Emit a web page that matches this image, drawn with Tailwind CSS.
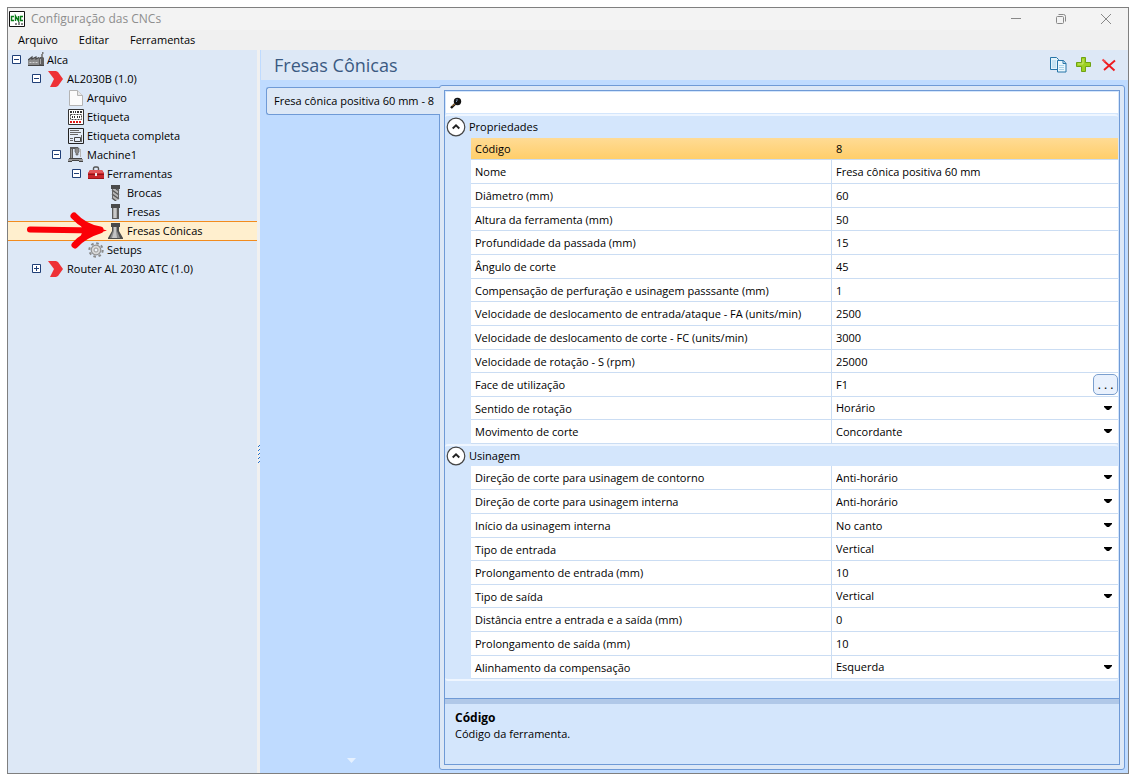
<!DOCTYPE html>
<html lang="pt-BR">
<head>
<meta charset="utf-8">
<title>Configuração das CNCs</title>
<script src="https://cdn.jsdelivr.net/npm/@tailwindcss/browser@4"></script>
</head>
<body class="flex h-screen bg-white pt-[7px] pr-1 pb-1 pl-[7px] font-['Segoe_UI','Open_Sans','Noto_Sans',sans-serif] text-[11px] text-black">

<svg class="hidden" aria-hidden="true">
  <symbol id="i-factory" viewBox="0 0 16 16">
    <path d="M0 14V8l4-3v2l4-2v2l3-1.500V14z" fill="#8b8b8b"/>
    <path d="M0 8l4-3v2l4-2v2l3-1.500" fill="none" stroke="#4a4a4a" stroke-width="1.200"/>
    <path d="M11 14V6l1-1h3l1 1v8z" fill="#606060"/><path d="M13 2h2v3h-2z" fill="#8a8a8a"/><path d="M14 0h1.500v2H14z" fill="#777"/>
    <path d="M1.500 10.500h8" stroke="#d0d0d0" stroke-dasharray="2 1"/><path d="M0 13.500h16" stroke="#444"/><path d="M12.500 7v5" stroke="#aaa"/>
  </symbol>
  <symbol id="i-chevron" viewBox="0 0 16 16"><path d="M0 0h8l2 1 5 7-5 7-2 1H2l4-8z" fill="#ee3136"/></symbol>
  <symbol id="i-file" viewBox="0 0 16 16">
    <path d="M1.500 0.500h8l5 5v10h-13z" fill="#fbfbfb" stroke="#b4b4b4"/><path d="M9.500 0.500v5h5" fill="#e8e8e8" stroke="#b4b4b4"/>
  </symbol>
  <symbol id="i-label" viewBox="0 0 16 16">
    <path d="M0.500 0.500h15v15h-15z" fill="#fff" stroke="#333"/>
    <path d="M2 2h2v2H2zm3 0h1v2H5zm2 0h1v2H7zm2 0h2v2H9zm3 0h2v2h-2z" fill="#333"/>
    <path d="M2.500 5.500h11v5h-11z" fill="none" stroke="#444" stroke-dasharray="2 1"/><path d="M4 8h3M9 8h3" stroke="#333" stroke-width="2" stroke-dasharray="1 1"/>
    <path d="M2 13h12" stroke="#e01818" stroke-width="2" stroke-dasharray="2 1"/>
  </symbol>
  <symbol id="i-labelfull" viewBox="0 0 16 16">
    <path d="M0.500 0.500h15v15h-15z" fill="#e5edf8" stroke="#222"/>
    <path d="M2 2.500h9M2 4.500h11M2 6.500h8M2 10.500h3M2 12.500h3" stroke="#666"/>
    <path d="M6.500 9.500h6v4h-6z" fill="none" stroke="#444"/><path d="M13.500 7v7" stroke="#666"/>
  </symbol>
  <symbol id="i-machine" viewBox="0 0 16 16">
    <path d="M2 0h8v2H5v9H2z" fill="#5c5c5c"/><path d="M3.500 2v9" stroke="#9a9a9a"/>
    <path d="M7 1h4v4l-1 1v2H8V6L7 5z" fill="#8b8b8b" stroke="#555" stroke-width=".6"/><path d="M12 2h1v8h-1z" fill="#b5b5b5"/>
    <path d="M1 11h13v1H1z" fill="#444"/><path d="M0 12h15v2H0z" fill="#999"/><path d="M0 14h4v1H0zm11 0h4v1h-4zM4 13h7v1H4z" fill="#444"/>
  </symbol>
  <symbol id="i-toolbox" viewBox="0 0 16 16">
    <path d="M5.500 4V2.500q0-1.500 1.500-1.500h2q1.500 0 1.500 1.500V4" fill="none" stroke="#555" stroke-width="1.400"/>
    <path d="M2 4h12l2 3v6H0V7z" fill="#c9262b"/><path d="M2 4h12l1.300 3H.7z" fill="#e2575a"/>
    <path d="M0 8.500h16" stroke="#8f1519"/><path d="M7 7h2v3H7z" fill="#ececec"/><path d="M0 12.500h16" stroke="#9a1519"/>
  </symbol>
  <symbol id="i-drill" viewBox="0 0 16 16">
    <path d="M3 0h9v4H3z" fill="#4a4a4a"/><path d="M4 4h7v10l-3 2-4-2z" fill="#b5b5b5"/>
    <path d="M4 5l7 5M4 9l7 5M4 13l4 3M8 4l3 2" stroke="#555" stroke-width="1.300"/><path d="M4.500 4v10M10.500 4v10" stroke="#666"/>
  </symbol>
  <symbol id="i-mill" viewBox="0 0 16 16">
    <path d="M3 0h9v4H3z" fill="#4a4a4a"/><path d="M4 4h7v11H4z" fill="#5a5a5a"/><path d="M5 4h4v10H5z" fill="#aaa"/><path d="M6 4h2v10H6z" fill="#c8c8c8"/>
  </symbol>
  <symbol id="i-cone" viewBox="0 0 16 16">
    <path d="M3 0h9v4H3z" fill="#4a4a4a"/><path d="M4 4h7v4l4 7v1H0v-1l4-7z" fill="#4d4d4d"/><path d="M5 4h4v4l3 7H2l3-7z" fill="#8c8c8c"/><path d="M6 4h2v4l1 7H4l2-7z" fill="#c4c4c4"/>
  </symbol>
  <symbol id="i-gear" viewBox="0 0 16 16">
    <circle cx="8" cy="8" r="6.700" fill="none" stroke="#8a8a8a" stroke-width="2" stroke-dasharray="2.600 2.660"/>
    <circle cx="8" cy="8" r="4.800" fill="#d8d8d8" stroke="#929292" stroke-width="1.200"/><circle cx="8" cy="8" r="2" fill="#eef3fa" stroke="#999"/>
  </symbol>
  <symbol id="i-plusbox" viewBox="0 0 9 9"><path d="M0.500 0.500h8v8h-8z" fill="#fff" stroke="#1f3f77"/><path d="M2 4.500h5M4.500 2v5" stroke="#1f3f77"/></symbol>
  <symbol id="i-minusbox" viewBox="0 0 9 9"><path d="M0.500 0.500h8v8h-8z" fill="#fff" stroke="#1f3f77"/><path d="M2 4.500h5" stroke="#1f3f77"/></symbol>
  <symbol id="i-collapse" viewBox="0 0 20 20">
    <circle cx="10" cy="10" r="8.800" fill="#fff" stroke="#444" stroke-width="1.200"/><path d="M6.700 11.500L10 8.300l3.300 3.200" fill="none" stroke="#222" stroke-width="1.900"/>
  </symbol>
</svg>

<div class="flex min-w-0 flex-1 flex-col border border-[#7f7f7f] bg-[#f0f0f0]">
  <header class="flex h-[22px] shrink-0 items-center bg-[#f3f3f3] pl-px">
    <svg class="h-4 w-4" viewBox="0 0 16 16" aria-hidden="true">
      <path d="M0.500 0.500h15v15h-15z" fill="#fff" stroke="#111"/>
      <path d="M5 5.500H2.500v4H5M6.500 10V5l3 5V5M14 5.500h-2.500v4H14" fill="none" stroke="#087d18" stroke-width="1.400"/>
      <path d="M6 12h2v2H6zm3-1h2v3H9zm3 1h2v2h-2z" fill="#888"/>
    </svg>
    <h1 class="ml-[6px] flex-1 text-[12px] text-[#8e8e8e]">Configuração das CNCs</h1>
    <div class="flex">
      <button class="flex h-5 w-[45px] items-center justify-center" aria-label="Minimizar"><svg class="h-3 w-3" viewBox="0 0 12 12"><path d="M1 5.500h10" stroke="#888"/></svg></button>
      <button class="flex h-5 w-[45px] items-center justify-center" aria-label="Restaurar"><svg class="h-3 w-3" viewBox="0 0 12 12" fill="none" stroke="#888"><rect x="1.500" y="3.500" width="7" height="7" rx="1"/><path d="M3.500 1.500h5q2 0 2 2v5"/></svg></button>
      <button class="flex h-5 w-[45px] items-center justify-center" aria-label="Fechar"><svg class="h-3 w-3" viewBox="0 0 12 12"><path d="M1 1l10 10M11 1L1 11" stroke="#888"/></svg></button>
    </div>
  </header>

  <nav class="flex h-5 shrink-0 items-center gap-[21px] pl-[10px]" aria-label="Menu">
    <button>Arquivo</button><button>Editar</button><button>Ferramentas</button>
  </nav>

  <div class="flex min-h-0 flex-1">
    <aside class="relative w-[249px] shrink-0 bg-[#dde8f6]">
      <ul id="tree" role="tree" aria-label="CNCs"></ul>
      <svg class="pointer-events-none absolute top-[160px] left-[18px] h-10 w-[82px]" viewBox="0 0 82 40" aria-hidden="true">
        <path d="M4 19.500L70 20.500" stroke="#fb0007" stroke-width="6" stroke-linecap="round"/>
        <path d="M48 6Q58 17 74 20Q58 25 49 35" fill="none" stroke="#fb0007" stroke-width="7" stroke-linecap="round" stroke-linejoin="round"/>
        <path d="M51 7Q64 17 81 20.500Q64 24 51 36L57 20z" fill="#fb0007"/>
      </svg>
    </aside>

    <div class="flex w-[3px] shrink-0 items-center justify-end pt-[86px]" role="separator">
      <svg class="h-5 w-[2px] shrink-0" viewBox="0 0 2 20" aria-hidden="true"><path d="M1 0h1v1H1zM0 1h1v1H0zM1 4h1v1H1zM0 5h1v1H0zM1 8h1v1H1zM0 9h1v1H0zM1 12h1v1H1zM0 13h1v1H0zM1 16h1v1H1zM0 17h1v1H0z" fill="#1f6fd0"/></svg>
    </div>

    <main class="flex min-w-0 flex-1 flex-col bg-[#bfdbff]">
      <div class="ml-px flex h-[30px] shrink-0 items-center bg-[#dde8f6] pr-[11px] pl-[13px]">
        <h2 class="flex-1 text-[18px] text-[#3b5a82]">Fresas Cônicas</h2>
        <div class="flex gap-[9px]">
          <button aria-label="Duplicar"><svg class="h-4 w-[17px]" viewBox="0 0 17 16"><path d="M0.500 0.500h6l2 2v10h-8z" fill="#e3f4fc" stroke="#2675a8"/><path d="M2 4h4M2 6h4M2 8h4M2 10h4" stroke="#a9d2e8"/><path d="M7.500 3.500h6l2.500 3v8.500H7.500z" fill="#eaf7fd" stroke="#2675a8"/><path d="M13 3.500v3h3" fill="none" stroke="#2675a8"/><path d="M9 8.500h5M9 10.500h5M9 12.500h5" stroke="#a9d2e8"/></svg></button>
          <button aria-label="Adicionar"><svg class="h-4 w-4" viewBox="0 0 16 16"><path d="M5.500 0.500h4v5h5v4h-5v5h-4v-5h-5v-4h5z" fill="#9ed022" stroke="#6ea313"/><path d="M7 2v5H2" fill="none" stroke="#c7e86d"/></svg></button>
          <button aria-label="Excluir"><svg class="h-4 w-4" viewBox="0 0 16 16"><path d="M3 4L13.500 13.500M14 3.500L3 13" stroke="#ee1c20" stroke-width="1.900"/><path d="M1.500 2.500l3 2.500" stroke="#f0484b" stroke-width="2.200"/></svg></button>
        </div>
      </div>

      <div class="flex min-h-0 flex-1 pt-[5px] pr-[3px] pb-[3px] pl-[6px]">
        <div class="flex w-[173px] shrink-0 flex-col items-center justify-between pt-[2px] pb-[7px]">
          <button class="relative z-10 h-7 w-[174px] self-start rounded-l-[3px] border border-r-0 border-[#6f9ad6] bg-[#dde8f6] pl-[7px] text-left whitespace-nowrap">Fresa cônica positiva 60 mm - 8</button>
          <svg class="mr-[2px] h-[5px] w-[9px]" viewBox="0 0 9 5" aria-hidden="true"><path d="M0 0h9L4.500 5z" fill="#e6f1ff"/></svg>
        </div>

        <section class="flex min-w-0 flex-1 flex-col rounded-[3px] border border-[#6f9ad6] bg-[#dde8f6] p-1">
          <div class="flex min-h-0 flex-1 flex-col border border-[#6f9ad6] bg-[#d4e6fc]">
            <div class="mx-px mt-px flex h-[21px] shrink-0 items-center bg-white pl-1">
              <svg class="h-3 w-3 shrink-0" viewBox="0 0 12 12" aria-hidden="true"><circle cx="7.500" cy="4.500" r="3.700" fill="#111"/><path d="M1 11l4-4" stroke="#111" stroke-width="2.400"/><path d="M6 3h2M6 5l1-1" stroke="#7f9abb"/><path d="M2 9l3-2" stroke="#b07838"/></svg>
              <input id="search" type="text" aria-label="Pesquisar" class="h-full min-w-0 flex-1 bg-transparent px-1 outline-none">
            </div>
            <div id="grid" class="mt-px pr-px"></div>
            <div class="flex-1"></div>
            <div class="h-[6px] shrink-0 border-t border-[#6f9ad6] bg-[#b0c8e8]"></div>
            <div class="h-[60px] shrink-0 px-[10px] pt-[6px] leading-4">
              <h3 class="text-[12px] font-bold">Código</h3>
              <p>Código da ferramenta.</p>
            </div>
          </div>
        </section>
      </div>
    </main>
  </div>
</div>

<script>
const indent = ['pl-1', 'pl-6', 'pl-11', 'pl-[64px]', 'pl-[84px]'];
const nodes = [
  [0, '-', 'factory', 'Alca'], [1, '-', 'chevron', 'AL2030B (1.0)'], [2, '', 'file', 'Arquivo'],
  [2, '', 'label', 'Etiqueta'], [2, '', 'labelfull', 'Etiqueta completa'], [2, '-', 'machine', 'Machine1'],
  [3, '-', 'toolbox', 'Ferramentas'], [4, '', 'drill', 'Brocas'], [4, '', 'mill', 'Fresas'],
  [4, '', 'cone', 'Fresas Cônicas', true], [3, '', 'gear', 'Setups'], [1, '+', 'chevron', 'Router AL 2030 ATC (1.0)']
];
document.getElementById('tree').innerHTML = nodes.map(([depth, toggle, icon, text, selected]) => `
  <li role="treeitem" aria-level="${depth + 1}" class="flex h-[19px] items-center whitespace-nowrap ${indent[depth]} ${selected ? 'shadow-[inset_0_1px_#f28b1d,0_1px_#f28b1d] bg-[#ffefce]' : ''}">
    <span class="flex w-4 shrink-0">${toggle ? `<button aria-label="${toggle === '-' ? 'Recolher' : 'Expandir'} ${text}"><svg class="h-[9px] w-[9px]"><use href="#${toggle === '-' ? 'i-minusbox' : 'i-plusbox'}"/></svg></button>` : ''}</span>
    <svg class="mr-[3px] h-4 w-4 shrink-0" aria-hidden="true"><use href="#i-${icon}"/></svg>
    <span class="pt-[2px]">${text}</span>
  </li>`).join('');

const H24 = 'h-6', H23 = 'h-[23px]', H22 = 'h-[22px]';
const groups = [
  ['Propriedades', [
    [H22, 'Código', '8', 'current'], [H24, 'Nome', 'Fresa cônica positiva 60 mm'], [H24, 'Diâmetro (mm)', '60'],
    [H23, 'Altura da ferramenta (mm)', '50'], [H24, 'Profundidade da passada (mm)', '15'], [H24, 'Ângulo de corte', '45'],
    [H23, 'Compensação de perfuração e usinagem passsante (mm)', '1'],
    [H24, 'Velocidade de deslocamento de entrada/ataque - FA (units/min)', '2500'],
    [H24, 'Velocidade de deslocamento de corte - FC (units/min)', '3000'], [H23, 'Velocidade de rotação - S (rpm)', '25000'],
    [H24, 'Face de utilização', 'F1', 'browse'], [H23, 'Sentido de rotação', 'Horário', 'select'],
    [H24, 'Movimento de corte', 'Concordante', 'select']]],
  ['Usinagem', [
    [H24, 'Direção de corte para usinagem de contorno', 'Anti-horário', 'select'],
    [H24, 'Direção de corte para usinagem interna', 'Anti-horário', 'select'], [H24, 'Início da usinagem interna', 'No canto', 'select'],
    [H23, 'Tipo de entrada', 'Vertical', 'select'], [H24, 'Prolongamento de entrada (mm)', '10'], [H23, 'Tipo de saída', 'Vertical', 'select'],
    [H24, 'Distância entre a entrada e a saída (mm)', '0'], [H24, 'Prolongamento de saída (mm)', '10'],
    [H23, 'Alinhamento da compensação', 'Esquerda', 'select']]]
];
document.getElementById('grid').innerHTML = groups.map(([title, rows], g) => `
  <section class="rounded-[3px] ${g ? 'border-y-2' : 'border-t-2'} border-[#eff6ff] pl-px">
    <h3 class="flex ${g ? 'h-5' : 'h-[22px]'} items-center"><button class="-my-1 flex items-center gap-[3px]" aria-label="${title}"><svg class="h-5 w-5"><use href="#i-collapse"/></svg>${title}</button></h3>
    <div class="pl-[25px]">${rows.map(([height, name, value, kind], i) => {
      const id = `p${g}-${i}`;
      const field = kind === 'select'
        ? `<select id="${id}" class="h-full w-full appearance-none bg-transparent pt-px pl-1 outline-none"><option>${value}</option></select><svg class="pointer-events-none absolute top-[9px] right-[6px] h-[5px] w-2" viewBox="0 0 8 5"><path d="M0 0h8v1L5 4H3L0 1z"/></svg>`
        : `<input id="${id}" value="${value}" class="h-full w-full min-w-0 bg-transparent pl-1 outline-none">`;
      const browse = kind === 'browse' ? '<button class="mt-px h-[21px] w-[25px] shrink-0 rounded-[5px] border border-[#7b9fce] bg-[#e9f1fd] text-[12px] leading-[18px]" aria-label="Selecionar face">. . .</button>' : '';
      return `<div class="flex ${height} border-b border-[#cbddf3] ${kind === 'current' ? 'bg-linear-to-b from-[#ffdb94] to-[#ffce69]' : 'bg-white'}">
        <label for="${id}" class="flex w-[361px] shrink-0 items-center border-r ${kind === 'current' ? 'border-transparent' : 'border-[#cbddf3]'} pt-[2px] pl-1">${name}</label>
        <div class="relative flex min-w-0 flex-1">${field}${browse}</div></div>`;
    }).join('')}</div>
  </section>`).join('');
</script>
</body>
</html>
